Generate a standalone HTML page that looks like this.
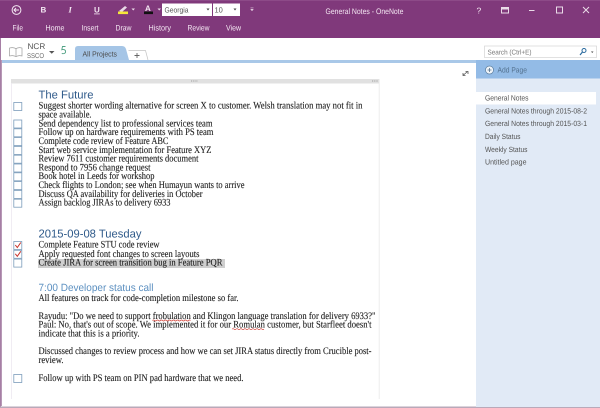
<!DOCTYPE html>
<html><head><meta charset="utf-8"><style>
html,body{margin:0;padding:0;background:#fff;width:600px;height:408px;overflow:hidden}
svg{display:block;filter:blur(0.25px)}
.s{font-family:"Liberation Serif",serif;font-size:10px;fill:#222;stroke:#222;stroke-width:.12}
.h{font-family:"Liberation Sans",sans-serif;fill:#2f5a8a}
.r{font-family:"Liberation Sans",sans-serif;font-size:8px;fill:#f3e6f2}
.n{font-family:"Liberation Sans",sans-serif;font-size:7.6px;fill:#555}
.cb{fill:#fff;stroke:#7c9cbb;stroke-width:.8}
.ck{fill:none;stroke:#c8322a;stroke-width:1}
.sq{fill:none;stroke:#d0352b;stroke-width:.6}
</style></head><body>
<svg width="600" height="408" viewBox="0 0 600 408" xmlns="http://www.w3.org/2000/svg" text-rendering="geometricPrecision">
<rect width="600" height="408" fill="#fff"/>
<!-- ribbon -->
<rect width="600" height="38" fill="#80397B"/>
<rect width="600" height="1" fill="#8d4a88"/>
<circle cx="16.500" cy="10" r="4.400" fill="none" stroke="#f3e6f2" stroke-width="1"/>
<path d="M19 10H14.200M16 8L14 10L16 12" fill="none" stroke="#f3e6f2" stroke-width="1"/>
<text x="40.500" y="12.500" class="r" style="font-weight:bold;font-size:8px">B</text>
<text x="68.500" y="12.500" class="r" style="font-family:'Liberation Serif';font-style:italic;font-weight:bold;font-size:8.500px">I</text>
<text x="94" y="12.500" class="r" style="font-size:8px;font-weight:bold;text-decoration:underline">U</text>
<path d="M119 11L125 6L127 7.500L122 12Z" fill="#e8d9e6"/>
<rect x="118" y="11.500" width="10" height="2.600" fill="#f5e63a"/>
<path d="M131.500 8.500h3.500l-1.750 2z" fill="#eadbe8"/>
<text x="145" y="11" class="r" style="font-weight:bold;font-size:8px">A</text>
<rect x="144" y="11.500" width="9" height="2.600" fill="#111"/>
<path d="M157.500 8.500h3.500l-1.750 2z" fill="#eadbe8"/>
<rect x="162" y="3.500" width="50" height="12.500" fill="#fff"/>
<text x="164.500" y="12.500" style="font-family:'Liberation Sans';font-size:7.500px;fill:#555" textLength="24" lengthAdjust="spacingAndGlyphs">Georgia</text>
<path d="M206.500 8.500h3l-1.500 2z" fill="#444"/>
<rect x="213" y="3.500" width="27" height="12.500" fill="#fff"/>
<text x="214.500" y="12.500" style="font-family:'Liberation Sans';font-size:7.500px;fill:#555">10</text>
<path d="M233.500 8.500h3l-1.500 2z" fill="#444"/>
<path d="M250.500 7.500h3M250.500 9h3l-1.500 2z" fill="#e0c9dd" stroke="#e0c9dd" stroke-width=".4"/>
<text x="12.500" y="30.500" class="r" textLength="10.500" lengthAdjust="spacingAndGlyphs">File</text>
<text x="45.500" y="30.500" class="r" textLength="19" lengthAdjust="spacingAndGlyphs">Home</text>
<text x="81.500" y="30.500" class="r" textLength="17" lengthAdjust="spacingAndGlyphs">Insert</text>
<text x="115.500" y="30.500" class="r" textLength="16" lengthAdjust="spacingAndGlyphs">Draw</text>
<text x="148.500" y="30.500" class="r" textLength="22.500" lengthAdjust="spacingAndGlyphs">History</text>
<text x="187.500" y="30.500" class="r" textLength="22" lengthAdjust="spacingAndGlyphs">Review</text>
<text x="226" y="30.500" class="r" textLength="15" lengthAdjust="spacingAndGlyphs">View</text>
<text x="325.500" y="14" class="r" textLength="78" lengthAdjust="spacingAndGlyphs">General Notes - OneNote</text>
<text x="476.500" y="13.500" class="r" style="font-size:8.500px">?</text>
<rect x="501.500" y="7.500" width="7" height="5.500" fill="none" stroke="#eadbe8"/><rect x="501.500" y="7.500" width="7" height="2" fill="#eadbe8"/>
<rect x="529" y="10" width="5.500" height="1" fill="#eadbe8"/>
<rect x="556.500" y="7" width="6" height="6" fill="none" stroke="#eadbe8"/>
<path d="M583 7L589 13M589 7L583 13" stroke="#eadbe8" fill="none"/>
<!-- notebook row -->
<path d="M16 48.500C14 47.500 11.500 47.500 9.500 48V56C11.500 55.500 14 55.500 16 56.500C18 55.500 20 55.500 22 56V48C20 47.500 18 47.500 16 48.500ZM16 48.500V56.500" fill="none" stroke="#8a8a8a" stroke-width=".6"/>
<text x="27.500" y="49" style="font-family:'Liberation Sans';font-size:8.200px;fill:#555">NCR</text>
<text x="27" y="58" style="font-family:'Liberation Sans';font-size:7px;fill:#666" textLength="17" lengthAdjust="spacingAndGlyphs">SSCO</text>
<path d="M49 51h5.500l-2.750 2.800z" fill="#555"/>
<path d="M65.500 46.500h-3l-.7 3.200c1.700-.7 3.800 0 3.800 1.800 0 2-2.300 2.800-3.800 1.700" fill="none" stroke="#4fa184" stroke-width=".9"/>
<!-- tabs -->
<path d="M75 60V49Q75 46 78 46H122Q125 46 126 49L129 60Z" fill="#a5c5e6"/>
<text x="82.500" y="56.500" style="font-family:'Liberation Sans';font-size:7.500px;fill:#4a4a4a" textLength="34.500" lengthAdjust="spacingAndGlyphs">All Projects</text>
<path d="M128.500 50.500H145.500L148 60" fill="#fff" stroke="#c4c4c4" stroke-width=".7"/>
<path d="M134.500 55.500h5M137 53v5" stroke="#666" stroke-width=".9"/>
<rect x="0" y="60" width="476" height="3" fill="#a9c8e8"/>
<rect x="0" y="38" width="1" height="370" fill="#a67fa5"/>
<rect x="1" y="60" width="1" height="346" fill="#b798b6"/>
<rect x="0" y="406.500" width="600" height="1.500" fill="#b9a9b9"/>
<!-- search -->
<rect x="484.500" y="46" width="112" height="11.500" fill="#fff" stroke="#d4d4d4" stroke-width=".7"/>
<text x="487.500" y="54.500" style="font-family:'Liberation Sans';font-size:7px;fill:#777" textLength="44" lengthAdjust="spacingAndGlyphs">Search (Ctrl+E)</text>
<circle cx="584" cy="50.500" r="2" fill="none" stroke="#2a6a9e" stroke-width="1"/>
<path d="M582.500 52L580 55" stroke="#2a6a9e" stroke-width="1.200"/>
<path d="M591 51.500h2.500l-1.250 1.500z" fill="#444"/>
<!-- right pane -->
<rect x="476" y="60" width="124" height="347" fill="#e1eaf6"/>
<rect x="476" y="60" width="124" height="18.500" fill="#93bbe6"/>
<rect x="476" y="92" width="120" height="12.500" fill="#fff"/>
<circle cx="489.500" cy="70" r="4" fill="#f0f5fa" stroke="#5d7f9f" stroke-width=".7"/>
<path d="M487.500 70h4M489.500 68v4" stroke="#55718c" stroke-width=".8"/>
<text x="497.500" y="72.500" style="font-family:'Liberation Sans';font-size:7.600px;fill:#54728f" textLength="29.500" lengthAdjust="spacingAndGlyphs">Add Page</text>
<text x="485" y="100.500" class="n" textLength="43.500" lengthAdjust="spacingAndGlyphs">General Notes</text>
<text x="485" y="113.500" class="n" textLength="102" lengthAdjust="spacingAndGlyphs">General Notes through 2015-08-2</text>
<text x="485" y="126" class="n" textLength="102" lengthAdjust="spacingAndGlyphs">General Notes through 2015-03-1</text>
<text x="485" y="139" class="n" textLength="35.500" lengthAdjust="spacingAndGlyphs">Daily Status</text>
<text x="485" y="152" class="n" textLength="42.500" lengthAdjust="spacingAndGlyphs">Weekly Status</text>
<text x="485" y="164.500" class="n" textLength="41.500" lengthAdjust="spacingAndGlyphs">Untitled page</text>
<!-- expand arrow -->
<path d="M463.500 75L467.500 71.500M465.500 71.500H468V74M463 73v2.500h2.500" fill="none" stroke="#555" stroke-width=".8"/>
<!-- note container -->
<rect x="11" y="79" width="368" height="4.500" fill="#e1e1e1"/>
<path d="M191 81h7" stroke="#888" stroke-width=".8" stroke-dasharray="1 .8"/>
<path d="M372 81h6" stroke="#888" stroke-width=".8" stroke-dasharray="1 .8"/>
<rect x="11" y="83" width=".8" height="316" fill="#ece8f0"/>
<rect x="378.800" y="79" width=".8" height="320" fill="#e8e8e8"/>
<!-- highlight -->
<rect x="38" y="259" width="187" height="9" fill="#cfcfcf"/>
<!-- headings -->
<text x="38.500" y="98.500" class="h" style="font-size:11.500px" textLength="55" lengthAdjust="spacingAndGlyphs">The Future</text>
<text x="38.500" y="237.700" class="h" style="font-size:11.500px" textLength="103" lengthAdjust="spacingAndGlyphs">2015-09-08 Tuesday</text>
<text x="38.500" y="291" class="h" style="font-size:10.500px;fill:#5b8fc0" textLength="115" lengthAdjust="spacingAndGlyphs">7:00 Developer status call</text>
<!-- checkboxes -->
<rect class="cb" x="13.800" y="102.500" width="8" height="8"/>
<rect class="cb" x="13.800" y="120" width="8" height="8"/>
<rect class="cb" x="13.800" y="128.800" width="8" height="8"/>
<rect class="cb" x="13.800" y="137.600" width="8" height="8"/>
<rect class="cb" x="13.800" y="146.400" width="8" height="8"/>
<rect class="cb" x="13.800" y="155.200" width="8" height="8"/>
<rect class="cb" x="13.800" y="164" width="8" height="8"/>
<rect class="cb" x="13.800" y="172.800" width="8" height="8"/>
<rect class="cb" x="13.800" y="181.600" width="8" height="8"/>
<rect class="cb" x="13.800" y="190.400" width="8" height="8"/>
<rect class="cb" x="13.800" y="199.200" width="8" height="8"/>
<rect class="cb" x="13.800" y="241.500" width="8" height="8"/>
<rect class="cb" x="13.800" y="250.300" width="8" height="8"/>
<rect class="cb" x="13.800" y="259.100" width="8" height="8"/>
<rect class="cb" x="13.800" y="374.500" width="8" height="8"/>
<path class="ck" d="M15.300 245L17.300 247.500L20.800 242.500"/>
<path class="ck" d="M15.300 253.800L17.300 256.300L20.800 251.300"/>
<!-- body text -->
<text class="s" x="38.500" y="108.700" textLength="324" lengthAdjust="spacingAndGlyphs">Suggest shorter wording alternative for screen X to customer. Welsh translation may not fit in</text>
<text class="s" x="38.500" y="117.400" textLength="53" lengthAdjust="spacingAndGlyphs">space available.</text>
<text class="s" x="38.500" y="126.400" textLength="174" lengthAdjust="spacingAndGlyphs">Send dependency list to professional services team</text>
<text class="s" x="38.500" y="135.200" textLength="175" lengthAdjust="spacingAndGlyphs">Follow up on hardware requirements with PS team</text>
<text class="s" x="38.500" y="144" textLength="130" lengthAdjust="spacingAndGlyphs">Complete code review of Feature ABC</text>
<text class="s" x="38.500" y="152.800" textLength="173" lengthAdjust="spacingAndGlyphs">Start web service implementation for Feature XYZ</text>
<text class="s" x="38.500" y="161.600" textLength="160" lengthAdjust="spacingAndGlyphs">Review 7611 customer requirements document</text>
<text class="s" x="38.500" y="170.400" textLength="112" lengthAdjust="spacingAndGlyphs">Respond to 7956 change request</text>
<text class="s" x="38.500" y="179.200" textLength="116" lengthAdjust="spacingAndGlyphs">Book hotel in Leeds for workshop</text>
<text class="s" x="38.500" y="188" textLength="206" lengthAdjust="spacingAndGlyphs">Check flights to London; see when Humayun wants to arrive</text>
<text class="s" x="38.500" y="196.800" textLength="164" lengthAdjust="spacingAndGlyphs">Discuss QA availability for deliveries in October</text>
<text class="s" x="38.500" y="205.600" textLength="132" lengthAdjust="spacingAndGlyphs">Assign backlog JIRAs to delivery 6933</text>
<text class="s" x="38.500" y="247.700" textLength="121" lengthAdjust="spacingAndGlyphs">Complete Feature STU code review</text>
<text class="s" x="38.500" y="256.800" textLength="161" lengthAdjust="spacingAndGlyphs">Apply requested font changes to screen layouts</text>
<text class="s" x="38.500" y="265.700" textLength="184" lengthAdjust="spacingAndGlyphs">Create JIRA for screen transition bug in Feature PQR</text>
<text class="s" x="38.500" y="301" textLength="200" lengthAdjust="spacingAndGlyphs">All features on track for code-completion milestone so far.</text>
<text class="s" x="38.500" y="319" textLength="337" lengthAdjust="spacingAndGlyphs">Rayudu: "Do we need to support frobulation and Klingon language translation for delivery 6933?"</text>
<text class="s" x="38.500" y="327.700" textLength="333" lengthAdjust="spacingAndGlyphs">Paul: No, that's out of scope. We implemented it for our Romulan customer, but Starfleet doesn't</text>
<text class="s" x="38.500" y="336.500" textLength="101" lengthAdjust="spacingAndGlyphs">indicate that this is a priority.</text>
<text class="s" x="38.500" y="354.200" textLength="333" lengthAdjust="spacingAndGlyphs">Discussed changes to review process and how we can set JIRA status directly from Crucible post-</text>
<text class="s" x="38.500" y="363" textLength="25" lengthAdjust="spacingAndGlyphs">review.</text>
<text class="s" x="38.500" y="381" textLength="205" lengthAdjust="spacingAndGlyphs">Follow up with PS team on PIN pad hardware that we need.</text>
<path class="sq" d="M152.500 320.500q1-1 2 0t2 0t2 0t2 0t2 0t2 0t2 0t2 0t2 0t2 0t2 0t2 0t2 0t2 0t2 0t2 0t2 0t2 0t2 0"/>
<path class="sq" d="M232 329.200q1-1 2 0t2 0t2 0t2 0t2 0t2 0t2 0t2 0t2 0t2 0t2 0t2 0t2 0t2 0t2 0t2 0"/>
</svg>
</body></html>
